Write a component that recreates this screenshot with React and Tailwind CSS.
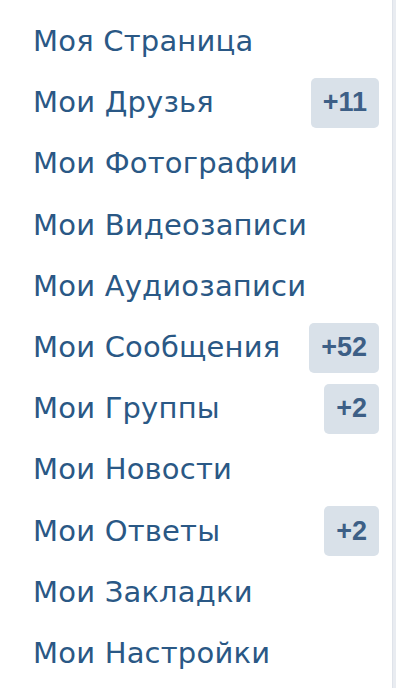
import React from 'react';

const items = [
  { label: 'Моя Страница' },
  { label: 'Мои Друзья', badge: '+11' },
  { label: 'Мои Фотографии' },
  { label: 'Мои Видеозаписи' },
  { label: 'Мои Аудиозаписи' },
  { label: 'Мои Сообщения', badge: '+52' },
  { label: 'Мои Группы', badge: '+2' },
  { label: 'Мои Новости' },
  { label: 'Мои Ответы', badge: '+2' },
  { label: 'Мои Закладки' },
  { label: 'Мои Настройки' },
];

const App = () => {
  return (
    <div className="flex w-[400px] h-[688px] bg-white overflow-hidden">
      <ul className="w-[392px] pl-[33px] pr-[13px] pt-[11px]">
        {items.map((item) => (
          <li key={item.label} className="flex items-center justify-between h-[61.2px]">
            <span className="text-[29px] leading-none text-[#2a5885] tracking-[0.2px] font-['DejaVu_Sans',sans-serif]">
              {item.label}
            </span>
            {item.badge && (
              <span className="flex items-center justify-center h-[50px] min-w-[54px] px-[12px] rounded-[5px] bg-[#d9e1e9] text-[27px] leading-none font-bold text-[#3d5f86] font-['Liberation_Sans',Arial,sans-serif]">
                {item.badge}
              </span>
            )}
          </li>
        ))}
      </ul>
      <div className="w-[4px] h-full border-l border-[#dfe3ea] bg-[#e9ecf1]" />
    </div>
  );
};

export default App;
